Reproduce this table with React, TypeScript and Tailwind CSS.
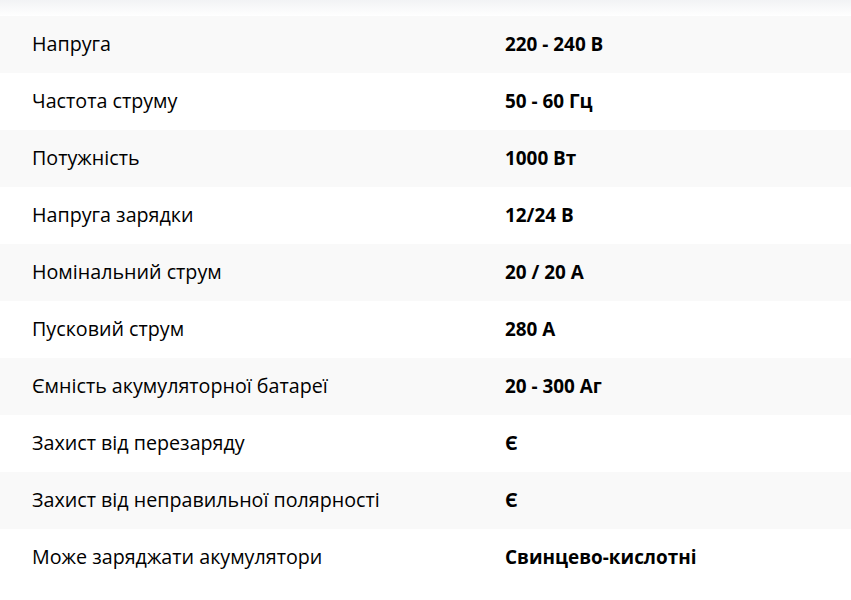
const specs: [string, string][] = [
  ["Напруга", "220 - 240 В"],
  ["Частота струму", "50 - 60 Гц"],
  ["Потужність", "1000 Вт"],
  ["Напруга зарядки", "12/24 В"],
  ["Номінальний струм", "20 / 20 А"],
  ["Пусковий струм", "280 А"],
  ["Ємність акумуляторної батареї", "20 - 300 Аг"],
  ["Захист від перезаряду", "Є"],
  ["Захист від неправильної полярності", "Є"],
  ["Може заряджати акумулятори", "Свинцево-кислотні"],
];

export default function App() {
  return (
    <div
      className="w-[851px] h-[600px] bg-white text-black overflow-hidden"
      style={{ fontFamily: '"Open Sans", "Noto Sans", sans-serif' }}
    >
      <div className="h-4 bg-gradient-to-b from-[#f2f3f5] to-white" />
      <div className="flex flex-col">
        {specs.map(([label, value], i) => (
          <div
            key={label}
            className={`flex items-center h-[57px] pb-px ${
              i % 2 === 0 ? "bg-[#f9f9f9]" : "bg-white"
            }`}
          >
            <div className="w-[505px] pl-8 text-[19.7px]">{label}</div>
            <div className="font-bold text-[18.9px]">{value}</div>
          </div>
        ))}
      </div>
    </div>
  );
}
